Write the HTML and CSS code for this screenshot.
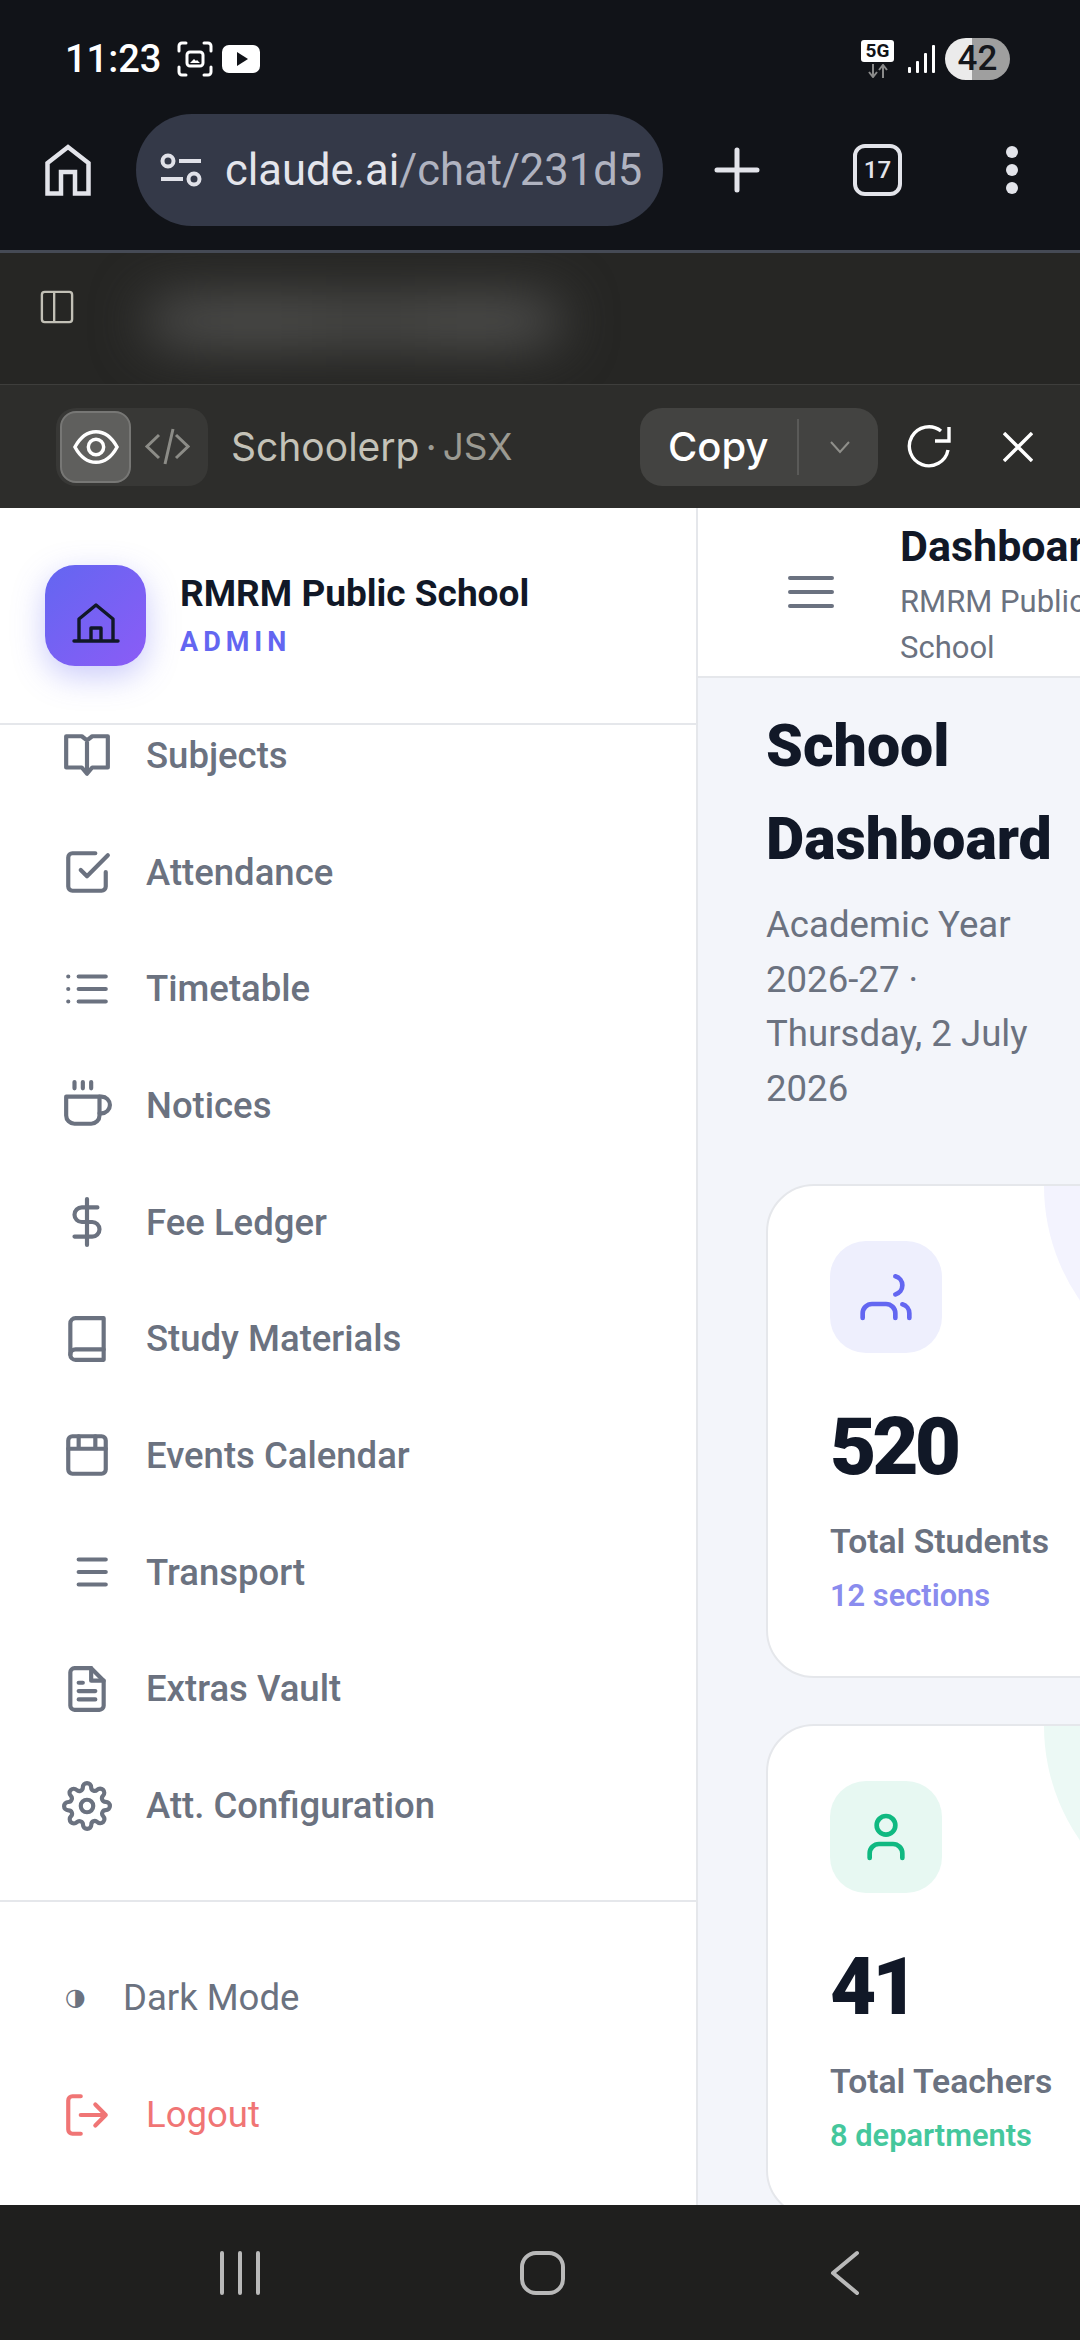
FILE: index.html
```html
<!DOCTYPE html>
<html lang="en">
<head>
  <meta charset="UTF-8">
  <title>School Dashboard</title>
  <meta name="viewport" content="width=device-width, initial-scale=1.0">
  <link rel="stylesheet" href="styles.css">
</head>
<body>
  <div class="status-bar">
    <div class="status-left">
      <span class="clock">11:23</span>
      <svg class="ic-capture" viewBox="0 0 36 36" fill="none" stroke="#fff" stroke-width="3" stroke-linecap="round">
        <path d="M2 10V5a3 3 0 0 1 3-3h4M27 2h4a3 3 0 0 1 3 3v5M34 26v5a3 3 0 0 1-3 3h-4M9 34H5a3 3 0 0 1-3-3v-5"/>
        <rect x="10" y="11" width="16" height="14" rx="3"/>
        <path d="M13 22l4-4 2 2 1-1 3 3z" fill="#fff" stroke="none"/>
      </svg>
      <span class="yt-badge"><span class="yt-play"></span></span>
    </div>
    <div class="status-right">
      <div class="net">
        <span class="net-5g">5G</span>
        <svg class="net-arrows" viewBox="0 0 28 14" fill="none" stroke="#8a8a8a" stroke-width="2">
          <path d="M9 0v12M5 8l4 5 4-5M19 14V2M15 6l4-5 4 5"/>
        </svg>
      </div>
      <svg class="ic-signal" viewBox="0 0 27 28" fill="#fff">
        <rect x="0" y="22" width="3" height="6" rx="1"/>
        <rect x="8" y="16" width="3" height="12" rx="1"/>
        <rect x="16" y="8" width="3" height="20" rx="1"/>
        <rect x="24" y="0" width="3" height="28" rx="1"/>
      </svg>
      <div class="battery">42</div>
    </div>
  </div>

  <div class="browser-bar">
    <svg class="ic-home" viewBox="0 0 46 52" fill="none" stroke="#e3e4ea" stroke-width="4.5">
      <path d="M2.500 49.500V19L23 3l20.500 16v30.500H30V28H16v21.500z"/>
    </svg>
    <div class="url-pill">
      <svg class="ic-tune" viewBox="0 0 42 34" fill="none" stroke="#e0e1e8" stroke-width="4">
        <circle cx="8" cy="8" r="5.500"/>
        <path d="M19 8h22M1 26h22"/>
        <circle cx="34" cy="26" r="5.500"/>
      </svg>
      <span class="url-text"><span class="url-host">claude.ai</span>/chat/231d5</span>
    </div>
    <svg class="ic-plus" viewBox="0 0 46 46" stroke="#e3e4ea" stroke-width="5" stroke-linecap="round">
      <path d="M23 3v40M3 23h40"/>
    </svg>
    <div class="tab-count">17</div>
    <div class="dots"><span></span><span></span><span></span></div>
  </div>

  <div class="chat-bar">
    <svg class="ic-panel" viewBox="0 0 36 36" fill="none" stroke="#c2c0b6" stroke-width="2.500">
      <rect x="2" y="2" width="32" height="32" rx="3"/>
      <path d="M15 2v32"/>
    </svg>
    <div class="blur-title"></div>
  </div>

  <div class="artifact-bar">
    <div class="view-toggle">
      <button class="toggle-btn active">
        <svg viewBox="0 0 48 48" width="46" height="46" fill="none" stroke="#fff" stroke-width="3.600">
          <path d="M2 24C8 13 15 8 24 8s16 5 22 16c-6 11-13 16-22 16S8 35 2 24z"/>
          <circle cx="24" cy="24" r="8"/>
        </svg>
      </button>
      <button class="toggle-btn">
        <svg viewBox="0 0 46 46" width="46" height="46" fill="none" stroke="#8c8c87" stroke-width="3">
          <path d="M15 11L3 22.500 15 34M32 11l12 11.500L32 34M29 5l-8 35"/>
        </svg>
      </button>
    </div>
    <div class="artifact-name">Schoolerp<span class="artifact-dot">·</span><span class="artifact-type">JSX</span></div>
    <div class="copy-btn">
      <span class="copy-label">Copy</span>
      <span class="copy-sep"></span>
      <svg class="copy-caret" viewBox="0 0 22 14" fill="none" stroke="#8f8f8a" stroke-width="2"><path d="M2 2l9 10 9-10"/></svg>
    </div>
    <svg class="ic-refresh" viewBox="0 0 46 46" fill="none" stroke="#fff" stroke-width="3.400">
      <path d="M42 26a19.500 19.500 0 1 1-7-19"/>
      <path d="M43 3v14H29"/>
    </svg>
    <svg class="ic-close" viewBox="0 0 30 30" stroke="#fff" stroke-width="3.400"><path d="M1 1l28 28M29 1L1 29"/></svg>
  </div>

  <div class="app">
    <aside class="sidebar">
      <div class="brand">
        <div class="brand-logo">
          <svg viewBox="0 0 48 42" width="48" height="42" fill="none" stroke="#111827" stroke-width="3.400" stroke-linecap="round" stroke-linejoin="round">
            <path d="M2 39h44M7 39V17L24 3l17 14v22M19 39V26h10v13"/>
          </svg>
        </div>
        <div>
          <div class="brand-name">RMRM Public School</div>
          <div class="brand-role">ADMIN</div>
        </div>
      </div>

      <nav class="nav">
        <div class="nav-list">
          <a class="nav-item">
            <svg class="nav-icon" viewBox="0 0 24 24"><path d="M2 3h7.500L12 5l2.500-2H22v15h-7.500L12 21l-2.500-3H2zM12 5v16"/></svg>
            Subjects
          </a>
          <a class="nav-item">
            <svg class="nav-icon" viewBox="0 0 24 24"><path d="M9 11l3 3L22 4"/><path d="M21 12v7a2 2 0 0 1-2 2H5a2 2 0 0 1-2-2V5a2 2 0 0 1 2-2h11"/></svg>
            Attendance
          </a>
          <a class="nav-item">
            <svg class="nav-icon" viewBox="0 0 24 24"><path d="M8 6h13M8 12h13M8 18h13M3 6h.01M3 12h.01M3 18h.01"/></svg>
            Timetable
          </a>
          <a class="nav-item">
            <svg class="nav-icon" viewBox="0 0 24 24"><path d="M18 8h1a4 4 0 0 1 0 8h-1"/><path d="M2 8h16v9a4 4 0 0 1-4 4H6a4 4 0 0 1-4-4z"/><path d="M6 1v3M10 1v3M14 1v3"/></svg>
            Notices
          </a>
          <a class="nav-item">
            <svg class="nav-icon" viewBox="0 0 24 24"><path d="M12 1v22"/><path d="M17 5H9.500a3.500 3.500 0 0 0 0 7h5a3.500 3.500 0 0 1 0 7H6"/></svg>
            Fee Ledger
          </a>
          <a class="nav-item">
            <svg class="nav-icon" viewBox="0 0 24 24"><path d="M4 19.500A2.500 2.500 0 0 1 6.500 17H20"/><path d="M6.500 2H20v20H6.500A2.500 2.500 0 0 1 4 19.500v-15A2.500 2.500 0 0 1 6.500 2z"/></svg>
            Study Materials
          </a>
          <a class="nav-item">
            <svg class="nav-icon" viewBox="0 0 24 24"><rect x="3" y="3" width="18" height="18" rx="2"/><path d="M3 9h18M8 3v6M16 3v6"/></svg>
            Events Calendar
          </a>
          <a class="nav-item">
            <svg class="nav-icon" viewBox="0 0 24 24"><path d="M8 6h13M8 12h13M8 18h13"/></svg>
            Transport
          </a>
          <a class="nav-item">
            <svg class="nav-icon" viewBox="0 0 24 24"><path d="M14 2H6a2 2 0 0 0-2 2v16a2 2 0 0 0 2 2h12a2 2 0 0 0 2-2V8z"/><path d="M14 2v6h6M16 13H8M16 17H8M10 9H8"/></svg>
            Extras Vault
          </a>
          <a class="nav-item">
            <svg class="nav-icon" viewBox="0 0 24 24"><circle cx="12" cy="12" r="3"/><path d="M19.400 15a1.650 1.650 0 0 0 .33 1.820l.06.06a2 2 0 0 1 0 2.830 2 2 0 0 1-2.830 0l-.06-.06a1.650 1.650 0 0 0-1.820-.33 1.650 1.650 0 0 0-1 1.510V21a2 2 0 0 1-2 2 2 2 0 0 1-2-2v-.09A1.650 1.650 0 0 0 9 19.400a1.650 1.650 0 0 0-1.820.33l-.06.06a2 2 0 0 1-2.830 0 2 2 0 0 1 0-2.830l.06-.06a1.650 1.650 0 0 0 .33-1.820 1.650 1.650 0 0 0-1.510-1H3a2 2 0 0 1-2-2 2 2 0 0 1 2-2h.09A1.650 1.650 0 0 0 4.600 9a1.650 1.650 0 0 0-.33-1.820l-.06-.06a2 2 0 0 1 0-2.830 2 2 0 0 1 2.830 0l.06.06a1.650 1.650 0 0 0 1.820.33H9a1.650 1.650 0 0 0 1-1.510V3a2 2 0 0 1 2-2 2 2 0 0 1 2 2v.09a1.650 1.650 0 0 0 1 1.510 1.650 1.650 0 0 0 1.820-.33l.06-.06a2 2 0 0 1 2.830 0 2 2 0 0 1 0 2.830l-.06.06a1.650 1.650 0 0 0-.33 1.820V9a1.650 1.650 0 0 0 1.510 1H21a2 2 0 0 1 2 2 2 2 0 0 1-2 2h-.09a1.650 1.650 0 0 0-1.510 1z"/></svg>
            Att. Configuration
          </a>
        </div>
      </nav>

      <div class="side-footer">
        <a class="foot-item">
          <span class="foot-glyph">◑</span>
          Dark Mode
        </a>
        <a class="foot-item logout">
          <svg class="nav-icon" viewBox="0 0 24 24"><path d="M9 21H5a2 2 0 0 1-2-2V5a2 2 0 0 1 2-2h4"/><path d="M16 17l5-5-5-5M21 12H9"/></svg>
          Logout
        </a>
      </div>
    </aside>

    <main class="main">
      <header class="topbar">
        <svg class="ic-menu" viewBox="0 0 46 32" stroke="#6b7280" stroke-width="4" stroke-linecap="round">
          <path d="M2 2h42M2 16h42M2 30h42"/>
        </svg>
        <div class="topbar-text">
          <div class="topbar-title">Dashboard</div>
          <div class="topbar-sub">RMRM Public School</div>
        </div>
      </header>

      <div class="content">
        <h1 class="page-title">School Dashboard</h1>
        <p class="page-sub">Academic Year 2026-27 · Thursday, 2 July 2026</p>

        <section class="stat-card indigo">
          <div class="stat-icon">
            <svg viewBox="0 0 24 24" width="56" height="56"><path d="M16 21v-2a4 4 0 0 0-4-4H6a4 4 0 0 0-4 4v2"/><path d="M16 3.130a4 4 0 0 1 0 7.750"/><path d="M22 21v-2a4 4 0 0 0-3-3.870"/></svg>
          </div>
          <div class="stat-value">520</div>
          <div class="stat-label">Total Students</div>
          <div class="stat-note">12 sections</div>
        </section>

        <section class="stat-card green">
          <div class="stat-icon">
            <svg viewBox="0 0 24 24" width="56" height="56"><path d="M19 21v-2a4 4 0 0 0-4-4H9a4 4 0 0 0-4 4v2"/><circle cx="12" cy="7" r="4"/></svg>
          </div>
          <div class="stat-value">41</div>
          <div class="stat-label">Total Teachers</div>
          <div class="stat-note">8 departments</div>
        </section>
      </div>
    </main>
  </div>

  <div class="system-nav">
    <svg class="ic-recents" viewBox="0 0 42 44" stroke="#b9b9b9" stroke-width="4" stroke-linecap="round"><path d="M3 2v40M21 2v40M39 2v40"/></svg>
    <div class="ic-homebtn"></div>
    <svg class="ic-back" viewBox="0 0 30 46" fill="none" stroke="#b9b9b9" stroke-width="4" stroke-linecap="round" stroke-linejoin="round"><path d="M27 3L3 23l24 20"/></svg>
  </div>
</body>
</html>
```

FILE: styles.css
```css
* {
  box-sizing: border-box;
}

html, body {
  margin: 0;
  padding: 0;
}

body {
  width: 1080px;
  height: 2340px;
  display: flex;
  flex-direction: column;
  overflow: hidden;
  font-family: Roboto, "Liberation Sans", sans-serif;
  background: #111318;
}

svg {
  display: block;
  flex-shrink: 0;
}

/* phone status bar */
.status-bar {
  height: 112px;
  padding: 6px 70px 0 65px;
  display: flex;
  align-items: center;
  justify-content: space-between;
  color: #fff;
}

.status-left, .status-right {
  display: flex;
  align-items: center;
}

.clock {
  font-size: 38px;
  font-weight: 500;
  width: 112px;
}

.ic-capture {
  width: 36px;
  height: 36px;
  margin-right: 9px;
}

.yt-badge {
  width: 38px;
  height: 28px;
  background: #fff;
  border-radius: 7px;
  display: flex;
  align-items: center;
  justify-content: center;
}

.yt-play {
  border-left: 11px solid #111318;
  border-top: 7px solid transparent;
  border-bottom: 7px solid transparent;
  margin-left: 2px;
}

.net {
  width: 33px;
  margin-right: 14px;
}

.net-5g {
  display: block;
  background: #fff;
  color: #111318;
  font-size: 19px;
  font-weight: 700;
  line-height: 22px;
  height: 22px;
  text-align: center;
  border-radius: 3px;
}

.net-arrows {
  width: 28px;
  height: 14px;
  margin: 2px 0 0 3px;
}

.ic-signal {
  width: 27px;
  height: 28px;
  margin-right: 10px;
}

.battery {
  width: 65px;
  height: 42px;
  border-radius: 21px;
  background: linear-gradient(90deg, #ebebeb 0, #ebebeb 27px, #9f9f9f 27px);
  color: #15171c;
  font-size: 35px;
  font-weight: 500;
  line-height: 42px;
  text-align: center;
}

/* browser toolbar */
.browser-bar {
  height: 141px;
  border-bottom: 3px solid #454a55;
  padding: 0 0 22px 45px;
  display: flex;
  align-items: center;
}

.ic-home {
  width: 46px;
  height: 52px;
  margin-right: 45px;
}

.url-pill {
  width: 527px;
  height: 112px;
  border-radius: 56px;
  background: #343948;
  display: flex;
  align-items: center;
  padding-left: 24px;
  margin-right: 51px;
}

.ic-tune {
  width: 42px;
  height: 34px;
  margin-right: 23px;
}

.url-text {
  font-size: 43.500px;
  color: #b0b3c0;
  white-space: nowrap;
}

.url-host {
  color: #e4e5ec;
}

.ic-plus {
  width: 46px;
  height: 46px;
  margin-right: 93px;
}

.tab-count {
  width: 49px;
  height: 52px;
  border: 4px solid #e3e4ea;
  border-radius: 12px;
  color: #e3e4ea;
  font-size: 24px;
  font-weight: 500;
  line-height: 44px;
  text-align: center;
  margin-right: 104px;
}

.dots {
  display: flex;
  flex-direction: column;
  gap: 6px;
}

.dots span {
  width: 12px;
  height: 12px;
  border-radius: 50%;
  background: #e3e4ea;
}

/* chat header, title is blurred out */
.chat-bar {
  height: 132px;
  background: #262624;
  border-bottom: 1px solid #3e3e3c;
  overflow: hidden;
  padding: 0 0 24px 40px;
  display: flex;
  align-items: center;
}

.ic-panel {
  width: 34px;
  height: 34px;
  margin-right: 70px;
}

.blur-title {
  width: 420px;
  height: 50px;
  margin-top: 28px;
  border-radius: 25px;
  background: linear-gradient(90deg, #484847 0, #545452 25%, #4b4b49 55%, #545452 80%, #484847 100%);
  filter: blur(26px);
}

/* artifact toolbar */
.artifact-bar {
  height: 123px;
  background: #2d2d2b;
  padding-left: 56px;
  display: flex;
  align-items: center;
}

.view-toggle {
  width: 152px;
  height: 78px;
  border-radius: 20px;
  background: #383836;
  padding: 3px 4px;
  display: flex;
  margin-right: 23px;
}

.toggle-btn {
  width: 71px;
  height: 72px;
  padding: 0;
  border: 0;
  background: none;
  display: flex;
  align-items: center;
  justify-content: center;
}

.toggle-btn.active {
  background: #5f5f5d;
  border: 2px solid #777775;
  border-radius: 16px;
}

.artifact-name {
  font-family: Inter, Roboto, sans-serif;
  font-size: 39px;
  color: #c4c2b8;
  width: 409px;
  white-space: nowrap;
  display: flex;
  align-items: center;
}

.artifact-dot {
  margin: 0 6px;
  color: #9b9a92;
}

.artifact-type {
  font-size: 37px;
  color: #9b9a92;
}

.copy-btn {
  width: 238px;
  height: 78px;
  border-radius: 22px;
  background: #434341;
  display: flex;
  align-items: center;
  padding-left: 28px;
  margin-right: 28px;
}

.copy-label {
  font-family: Inter, Roboto, sans-serif;
  font-size: 40px;
  font-weight: 500;
  color: #fff;
  width: 129px;
}

.copy-sep {
  width: 2px;
  height: 56px;
  background: #5a5a58;
  margin-right: 30px;
}

.copy-caret {
  width: 22px;
  height: 14px;
}

.ic-refresh {
  width: 46px;
  height: 46px;
  margin-right: 51px;
}

.ic-close {
  width: 30px;
  height: 30px;
}

/* app body */
.app {
  flex: 1;
  display: flex;
  min-height: 0;
  background: #fff;
}

.sidebar {
  width: 698px;
  flex-shrink: 0;
  border-right: 2px solid #e5e7eb;
  display: flex;
  flex-direction: column;
}

.brand {
  height: 217px;
  flex-shrink: 0;
  border-bottom: 2px solid #e5e7eb;
  padding: 0 0 0 45px;
  display: flex;
  align-items: center;
  gap: 34px;
}

.brand-logo {
  width: 101px;
  height: 101px;
  border-radius: 30px;
  background: linear-gradient(135deg, #6366f1, #8b5cf6);
  box-shadow: 0 10px 32px rgba(99, 102, 241, 0.35);
  display: flex;
  align-items: center;
  justify-content: center;
  padding-top: 14px;
}

.brand-name {
  font-size: 37px;
  font-weight: 700;
  line-height: 46px;
  color: #111827;
}

.brand-role {
  font-size: 27px;
  font-weight: 700;
  line-height: 36px;
  margin-top: 7px;
  letter-spacing: 5px;
  color: #6366f1;
}

.nav {
  flex: 1;
  min-height: 0;
  overflow: hidden;
}

.nav-list {
  margin-top: -28px;
}

.nav-item, .foot-item {
  height: 116.700px;
  display: flex;
  align-items: center;
  color: #6b7280;
  font-size: 36.500px;
}

.nav-item {
  padding-left: 62px;
  gap: 34px;
  font-weight: 500;
}

.nav-icon {
  width: 50px;
  height: 50px;
  fill: none;
  stroke: currentColor;
  stroke-width: 2;
  stroke-linecap: round;
  stroke-linejoin: round;
}

.side-footer {
  height: 305px;
  flex-shrink: 0;
  border-top: 2px solid #e5e7eb;
  padding: 37px 0 0 60px;
}

.foot-item {
  gap: 38px;
}

.foot-glyph {
  font-family: "DejaVu Sans", sans-serif;
  font-size: 24px;
  width: 20px;
  margin-left: 5px;
}

.logout {
  color: #f07575;
  height: 118px;
  gap: 34px;
}

.logout .nav-icon {
  margin-left: 2px;
}

/* main column, clipped on the right by the screen */
.main {
  flex: 1;
  min-width: 0;
  background: #f3f5fa;
  overflow: hidden;
}

.topbar {
  height: 170px;
  background: #fff;
  border-bottom: 2px solid #e5e7eb;
  padding-left: 90px;
  display: flex;
  align-items: center;
  gap: 66px;
}

.ic-menu {
  width: 46px;
  height: 32px;
}

.topbar-text {
  width: 250px;
  flex-shrink: 0;
  padding-top: 9px;
}

.topbar-title {
  font-size: 43px;
  font-weight: 700;
  line-height: 48px;
  color: #111827;
  white-space: nowrap;
  margin-bottom: 9px;
}

.topbar-sub {
  font-size: 31px;
  line-height: 46px;
  color: #6b7280;
}

.content {
  padding: 21px 0 0 68px;
}

.page-title {
  width: 320px;
  margin: 0;
  font-size: 59px;
  font-weight: 900;
  line-height: 93px;
  color: #111827;
}

.page-sub {
  width: 300px;
  margin: 13px 0 67px;
  font-size: 36.600px;
  line-height: 54.700px;
  color: #6b7280;
}

.stat-card {
  position: relative;
  overflow: hidden;
  width: 480px;
  height: 494px;
  margin-bottom: 46px;
  padding: 55px 0 0 62px;
  background: #fff;
  border: 2px solid #e5e7eb;
  border-radius: 48px;
}

/* soft quarter circle in the card corner */
.stat-card::before {
  content: "";
  position: absolute;
  top: -200px;
  right: -200px;
  width: 400px;
  height: 400px;
  border-radius: 50%;
}

.indigo::before { background: #f3f3fe; }
.green::before { background: #ecf9f5; }

.stat-icon {
  width: 112px;
  height: 112px;
  border-radius: 36px;
  display: flex;
  align-items: center;
  justify-content: center;
}

.stat-icon svg {
  fill: none;
  stroke: currentColor;
  stroke-width: 2;
  stroke-linecap: round;
  stroke-linejoin: round;
}

.indigo .stat-icon { background: #eeeffd; color: #6366f1; }
.green .stat-icon { background: #e7f8f2; color: #10b981; }

.stat-value {
  margin-top: 48px;
  font-size: 80px;
  font-weight: 900;
  line-height: 92px;
  letter-spacing: -4px;
  color: #111827;
}

.stat-label {
  margin-top: 27px;
  font-size: 33.700px;
  font-weight: 600;
  line-height: 44px;
  color: #6b7280;
  white-space: nowrap;
}

.stat-note {
  margin-top: 10px;
  font-size: 30.800px;
  font-weight: 600;
  line-height: 44px;
  white-space: nowrap;
}

.indigo .stat-note { color: #8a8cee; }
.green .stat-note { color: #45c79c; }

/* android nav */
.system-nav {
  height: 135px;
  flex-shrink: 0;
  background: #1f1f1e;
  display: flex;
  align-items: center;
  padding: 0 0 0 219px;
}

.ic-recents {
  width: 42px;
  height: 44px;
  margin-right: 259px;
}

.ic-homebtn {
  width: 45px;
  height: 44px;
  border: 4px solid #b9b9b9;
  border-radius: 16px;
  margin-right: 265px;
}

.ic-back {
  width: 30px;
  height: 46px;
}
```
